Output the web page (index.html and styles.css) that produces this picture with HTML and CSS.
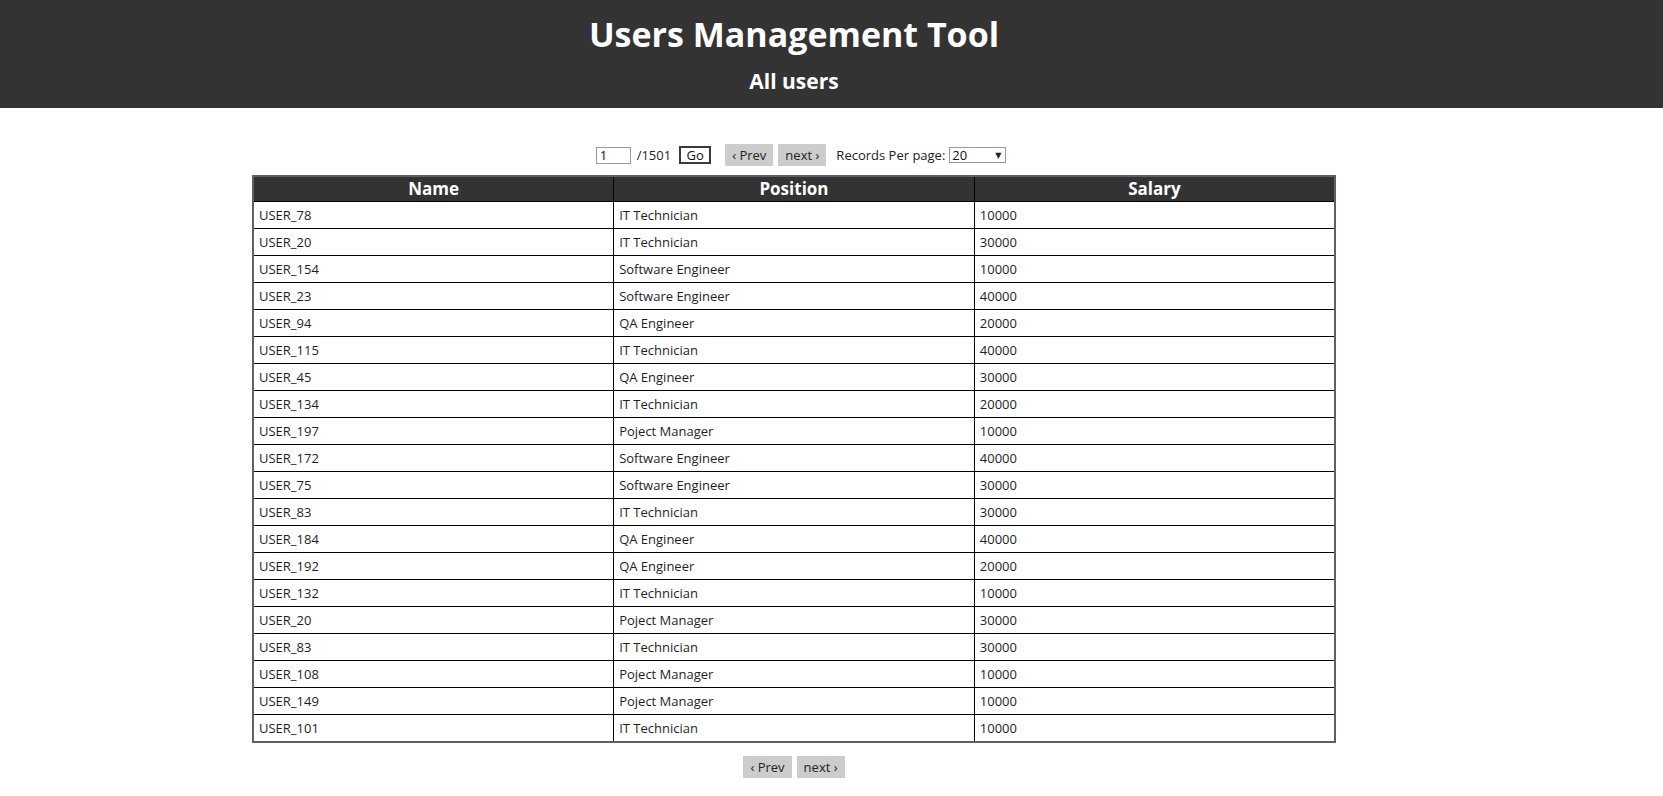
FILE: index.html
```html
<!DOCTYPE html>
<html lang="en">
<head>
<meta charset="utf-8">
<title>Users Management Tool</title>
<link rel="stylesheet" href="styles.css">
</head>
<body>
<header class="site-header">
  <div class="header-inner">
    <h1 class="title">Users Management Tool</h1>
    <h2 class="subtitle">All users</h2>
  </div>
</header>
<main class="page">
  <div class="pager pager-top">
    <input class="page-input" type="text" value="1">
    <span class="page-total">/1501</span>
    <button class="btn-go" type="button">Go</button>
    <div class="nav-pair">
      <button class="btn-nav" type="button">&lsaquo; Prev</button>
      <button class="btn-nav" type="button">next &rsaquo;</button>
    </div>
    <label class="per-page">Records Per page:
      <span class="select-wrap">
        <select class="per-select"><option>20</option><option>50</option><option>100</option></select>
        <span class="select-arrow">&#9660;</span>
      </span>
    </label>
  </div>
  <table class="users">
    <colgroup><col class="c"><col class="c"><col class="c"></colgroup>
    <thead>
      <tr><th>Name</th><th>Position</th><th>Salary</th></tr>
    </thead>
    <tbody>
      <tr><td>USER_78</td><td>IT Technician</td><td>10000</td></tr>
      <tr><td>USER_20</td><td>IT Technician</td><td>30000</td></tr>
      <tr><td>USER_154</td><td>Software Engineer</td><td>10000</td></tr>
      <tr><td>USER_23</td><td>Software Engineer</td><td>40000</td></tr>
      <tr><td>USER_94</td><td>QA Engineer</td><td>20000</td></tr>
      <tr><td>USER_115</td><td>IT Technician</td><td>40000</td></tr>
      <tr><td>USER_45</td><td>QA Engineer</td><td>30000</td></tr>
      <tr><td>USER_134</td><td>IT Technician</td><td>20000</td></tr>
      <tr><td>USER_197</td><td>Poject Manager</td><td>10000</td></tr>
      <tr><td>USER_172</td><td>Software Engineer</td><td>40000</td></tr>
      <tr><td>USER_75</td><td>Software Engineer</td><td>30000</td></tr>
      <tr><td>USER_83</td><td>IT Technician</td><td>30000</td></tr>
      <tr><td>USER_184</td><td>QA Engineer</td><td>40000</td></tr>
      <tr><td>USER_192</td><td>QA Engineer</td><td>20000</td></tr>
      <tr><td>USER_132</td><td>IT Technician</td><td>10000</td></tr>
      <tr><td>USER_20</td><td>Poject Manager</td><td>30000</td></tr>
      <tr><td>USER_83</td><td>IT Technician</td><td>30000</td></tr>
      <tr><td>USER_108</td><td>Poject Manager</td><td>10000</td></tr>
      <tr><td>USER_149</td><td>Poject Manager</td><td>10000</td></tr>
      <tr><td>USER_101</td><td>IT Technician</td><td>10000</td></tr>
    </tbody>
  </table>
  <div class="pager pager-bottom">
    <div class="nav-pair">
      <button class="btn-nav" type="button">&lsaquo; Prev</button>
      <button class="btn-nav" type="button">next &rsaquo;</button>
    </div>
  </div>
</main>
</body>
</html>
```
FILE: styles.css
```css
html, body {
  margin: 0;
  padding: 0;
  background: #ffffff;
}

body {
  font-family: "Open Sans", "Noto Sans", "DejaVu Sans", sans-serif;
  font-size: 13px;
  color: #222222;
}

.site-header {
  background: #333333;
  color: #ffffff;
}

.header-inner {
  width: 1588px;
  display: flex;
  flex-direction: column;
  align-items: center;
  padding: 14px 0 13px;
}

.title {
  margin: 0;
  font-size: 34px;
  line-height: 40px;
  font-weight: 700;
}

.subtitle {
  margin: 13px 0 0;
  font-size: 21px;
  line-height: 28px;
  font-weight: 700;
}

.page {
  width: 1588px;
  display: flex;
  flex-direction: column;
  align-items: center;
}

.pager {
  display: flex;
  align-items: center;
}

.pager-top {
  margin-top: 36px;
  margin-left: 14px;
  height: 22px;
}

.pager-bottom {
  margin-top: 13px;
}

.page-input {
  box-sizing: border-box;
  width: 35px;
  height: 17px;
  border: 1px solid #9a9a9a;
  padding: 0 3px;
  font: inherit;
  font-size: 13px;
  line-height: 15px;
  color: #111;
  margin: 0;
}

.page-total {
  margin-left: 6px;
}

.btn-go {
  box-sizing: border-box;
  margin: 0 0 0 8px;
  height: 18px;
  width: 32px;
  padding: 0;
  border: 2px solid #3a3a3a;
  background: #ffffff;
  font: inherit;
  font-size: 13px;
  line-height: 14px;
  color: #111;
}

.nav-pair {
  display: flex;
  gap: 5px;
}

.pager-top .nav-pair {
  margin-left: 14px;
}

.btn-nav {
  box-sizing: border-box;
  height: 22px;
  padding: 0 7px;
  margin: 0;
  border: none;
  background: #cccccc;
  font: inherit;
  font-size: 13px;
  line-height: 22px;
  color: #222;
}

.per-page {
  display: flex;
  align-items: center;
  margin-left: 10px;
  gap: 4px;
}

.select-wrap {
  position: relative;
  display: inline-block;
}

.per-select {
  appearance: none;
  -webkit-appearance: none;
  box-sizing: border-box;
  width: 57px;
  height: 16px;
  border: 1px solid #9a9a9a;
  border-radius: 0;
  background: #ffffff;
  padding: 0 0 0 2px;
  margin: 0;
  font: inherit;
  font-size: 13px;
  line-height: 14px;
  color: #111;
  display: block;
}

.select-arrow {
  position: absolute;
  right: 5px;
  top: 2px;
  font-size: 8px;
  line-height: 12px;
  color: #222;
  pointer-events: none;
}

.users {
  margin-top: 9px;
  width: 1084px;
  border-collapse: collapse;
  table-layout: fixed;
  border: 2px solid #5c6166;
}

.users .c {
  width: 33.333%;
}

.users th {
  background: #333333;
  color: #ffffff;
  font-size: 17px;
  font-weight: 700;
  height: 24px;
  line-height: 24px;
  padding: 0;
  text-align: center;
  border: 1px solid #000000;
  border-top: 2px solid #5c6166;
}

.users td {
  border: 1px solid #000000;
  padding: 4px 5px;
  line-height: 18px;
  height: 18px;
  text-align: left;
  color: #1e1e1e;
}

.users td:first-child,
.users th:first-child {
  border-left: 2px solid #5c6166;
}

.users td:last-child,
.users th:last-child {
  border-right: 2px solid #5c6166;
}

.users tbody tr:last-child td {
  border-bottom: 2px solid #5c6166;
}
```
